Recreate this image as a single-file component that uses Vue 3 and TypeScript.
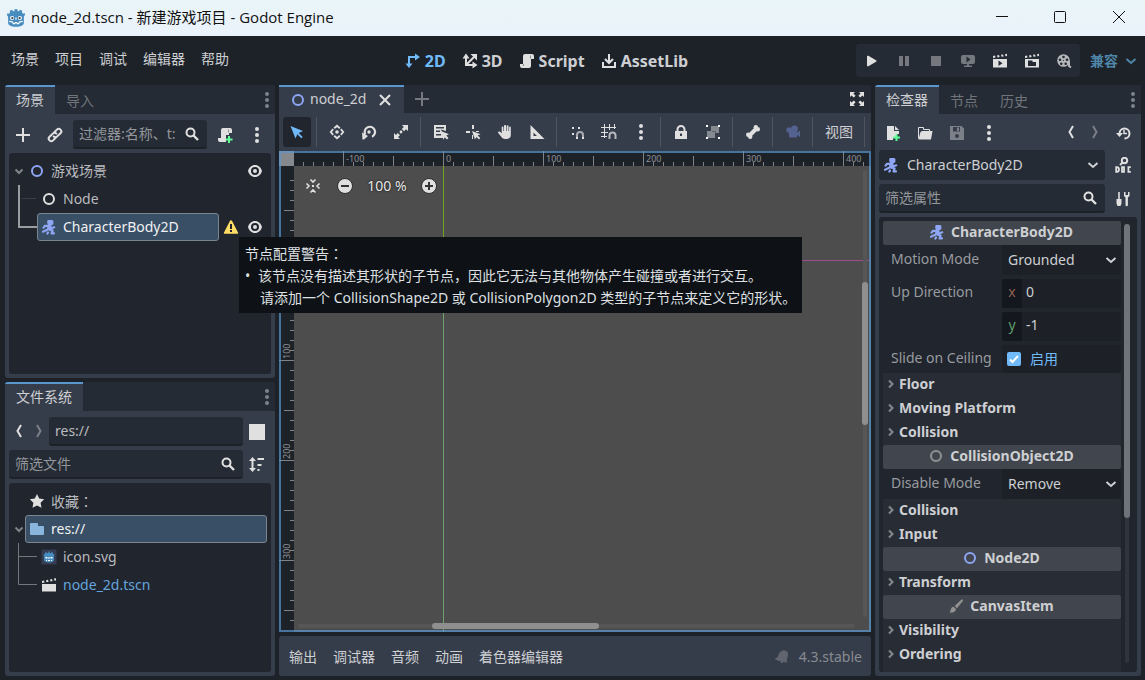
<script setup lang="ts">
import { computed, h, onBeforeUnmount, onMounted, ref } from 'vue'

const R = '#e0e0e0'

const icons: Record<string, string> = {
  node2d: '<circle cx="8" cy="8" r="5" fill="none" stroke="#8da5f3" stroke-width="2"/>',
  node: `<circle cx="8" cy="8" r="5" fill="none" stroke="${R}" stroke-width="2"/>`,
  collision: '<circle cx="8" cy="8" r="5" fill="none" stroke="#919191" stroke-width="2"/>',
  character:
    '<g fill="none" stroke="#8da5f3" stroke-width="2.2" stroke-linejoin="round" stroke-linecap="round"><path d="M7.500 6.800H4L2.600 8.600M9 7.500l1.600 1.800 2.600-1M8 9.500l-2.400 1.600-3.600 1.600M8.600 10.600l3 1-1 2.800h2.400M7 13.400l-.6 1.200"/></g><path fill="#8da5f3" d="M7 1h4.400l1 1v3l-1.200 1-1 .6.200 4.400H6.400L6 6.400l1-1.200-.8-1V2z"/>',
  eye: `<path fill="${R}" fill-rule="evenodd" d="M8 2C4.600 2 2 4.400 1 8c1 3.600 3.600 6 7 6s6-2.400 7-6c-1-3.600-3.600-6-7-6zm0 2a4 4 0 1 1 0 8 4 4 0 0 1 0-8z"/><circle cx="8" cy="8" r="2" fill="${R}"/>`,
  warning:
    '<path fill="#ffdd65" d="M8 1.200c.5 0 .8.200 1 .6l6 11.600c.4.800 0 1.400-.8 1.400H1.800c-.8 0-1.200-.6-.8-1.400l6-11.600c.2-.4.5-.6 1-.6z"/><path fill="#22252d" d="M7 5h2v5H7zM7 11h2v2H7z"/>',
  plus: `<path fill="${R}" d="M7 1h2v6h6v2H9v6H7V9H1V7h6z"/>`,
  link: `<g fill="none" stroke="${R}" stroke-width="2" stroke-linecap="round"><path d="M7.300 5.200l2.600-2.600a2.500 2.500 0 0 1 3.600 3.600L10.200 9.400a2.500 2.500 0 0 1-3.500.1"/><path d="M8.700 10.800l-2.600 2.600a2.500 2.500 0 0 1-3.600-3.600L5.800 6.600a2.500 2.500 0 0 1 3.500-.1"/></g>`,
  search: `<circle cx="6.500" cy="6.500" r="4" fill="none" stroke="${R}" stroke-width="2"/><path d="M9.500 9.500l4.500 4.500" stroke="${R}" stroke-width="2.400"/>`,
  script: `<path fill="${R}" d="M6 1a2 2 0 0 0-2 2v8H1v2a2 2 0 0 0 2 2h7a2 2 0 0 0 2-2V6h3V3a2 2 0 0 0-2-2z"/><path d="M11.500 2.500v3M4.500 11v2" stroke="#8b8d91"/>`,
  scriptAdd: `<path fill="${R}" d="M6 1a2 2 0 0 0-2 2v8H1v2a2 2 0 0 0 2 2h6V9h3V6h3V3a2 2 0 0 0-2-2z"/><path d="M11.500 2.500v3" stroke="#8b8d91"/><path fill="#363d4a" d="M9 8h7v8H9z"/><path fill="#5fff97" d="M11 9h2v2.500h2.500v2H13V16h-2v-2.500H8.500v-2H11z"/>`,
  dots: `<g fill="${R}"><circle cx="8" cy="2" r="2"/><circle cx="8" cy="8" r="2"/><circle cx="8" cy="14" r="2"/></g>`,
  dotsDim: '<g fill="#7e838b"><circle cx="8" cy="2" r="2"/><circle cx="8" cy="8" r="2"/><circle cx="8" cy="14" r="2"/></g>',
  chevronDown: '<path d="M4.500 6.500L8 10l3.500-3.500" fill="none" stroke="#808389" stroke-width="2"/>',
  chevronRight: '<path d="M6 4.500L9.500 8 6 11.500" fill="none" stroke="#85888e" stroke-width="2"/>',
  dropdown: '<path d="M3.500 6L8 10l4.500-4" fill="none" stroke="currentColor" stroke-width="2"/>',
  back: `<path d="M10 1L6.500 7l3.500 6" fill="none" stroke="${R}" stroke-width="2"/>`,
  forward: '<path d="M6 1l3.500 6L6 13" fill="none" stroke="#7b7f87" stroke-width="2"/>',
  star: `<path fill="${R}" d="M8 1l2.200 4.600 5 .7-3.600 3.500.9 5L8 12.400l-4.500 2.400.9-5L.8 6.300l5-.7z"/>`,
  folder: '<path fill="#8ab5dc" d="M2 2a1 1 0 0 0-1 1v10a1 1 0 0 0 1 1h12a1 1 0 0 0 1-1V6a1 1 0 0 0-1-1H9V3a1 1 0 0 0-1-1z"/>',
  split: `<path fill="${R}" d="M0 0h16v16H0z"/>`,
  sort: `<path fill="${R}" d="M3.500 0L7 4H4.500v7H7l-3.500 4L0 11h2.500V4H0zM8.500 1H15v2H8.500zM8.500 7h4v2h-4zM8.500 12h2v2h-2z"/>`,
  clapper: `<path fill="${R}" d="M1 7h14v7.500H1zM1 4l2-.4.600 2-2.600.4zM5 3.200l2-.4.600 2-2 .4zM9 2.400l2-.4.600 2-2 .4zM13 1.600l2-.4V3.400l-1.500.3z"/>`,
  play: `<path fill="${R}" d="M3 3.500c0-.9.800-1 1.400-.7l7.600 4.400c.7.400.7 1.200 0 1.600l-7.600 4.400c-.6.300-1.400.2-1.400-.7z"/>`,
  pause: '<path fill="#75787e" d="M3 3h4v10H3zM9 3h4v10H9z"/>',
  stop: '<path fill="#75787e" d="M3 3h10v10H3z"/>',
  remote: '<path fill="#75787e" fill-rule="evenodd" d="M3 2h10a2 2 0 0 1 2 2v5a2 2 0 0 1-2 2H9v1.500h3V14H4v-1.500h3V11H3a2 2 0 0 1-2-2V4a2 2 0 0 1 2-2zm3.500 1.500v6l4-3z"/>',
  playScene: `<path fill="${R}" fill-rule="evenodd" d="M1 6h14v8.500H1zm5.500 1.500v5.500l4-2.700zM1 3l2-.4.600 2-2.600.4zM5 2.400l2-.4.600 2-2 .4zM9 1.800l2-.4.600 2-2 .4zM13 1.200l2-.4V3l-1.500.3z"/>`,
  playCustom: `<path fill="${R}" fill-rule="evenodd" d="M1 6h14v8.500H1zm3 1.500v5.500h8V9H8.500V7.500zM1 3l2-.4.600 2-2.600.4zM5 2.400l2-.4.600 2-2 .4zM9 1.800l2-.4.600 2-2 .4zM13 1.200l2-.4V3l-1.500.3z"/>`,
  movie: '<circle cx="7.500" cy="7.500" r="6.300" fill="#b5b7ba"/><path d="M13 8v5l2 1.500" stroke="#b5b7ba" stroke-width="2" fill="none"/><g fill="#252b34"><circle cx="7.500" cy="4" r="1.300"/><circle cx="11" cy="6.700" r="1.300"/><circle cx="4" cy="6.700" r="1.300"/><circle cx="5.300" cy="10.700" r="1.300"/><circle cx="9.700" cy="10.700" r="1.300"/><circle cx="7.500" cy="7.500" r=".6"/></g>',
  close: `<path d="M3 3l10 10M13 3L3 13" stroke="${R}" stroke-width="2"/>`,
  plusDim: '<path fill="#75787e" d="M7 1h2v6h6v2H9v6H7V9H1V7h6z"/>',
  distraction: `<path fill="${R}" d="M1 1h5L4.400 2.600l2.200 2.200-1.800 1.800-2.200-2.200L1 6zM15 1v5l-1.600-1.600-2.200 2.200-1.800-1.800 2.200-2.200L10 1zM1 15v-5l1.600 1.600 2.200-2.200 1.800 1.800-2.200 2.200L6 15zM15 15h-5l1.600-1.600-2.200-2.200 1.800-1.800 2.200 2.200L15 10z"/>`,
  ws2d: '<path d="M4 11V4h7" fill="none" stroke="#70bafa" stroke-width="2"/><path fill="#70bafa" d="M10 .5L15 4l-5 3.500zM.5 10.500h7L4 15z"/>',
  ws3d: `<path d="M4 4v8h8M4 12l8-8" fill="none" stroke="${R}" stroke-width="2"/><path fill="${R}" d="M.5 5.500L4 .5l3.500 5zM10.500 8.500l5 3.500-5 3.500zM8.500 1H15v6.500z"/>`,
  assetlib: `<path d="M8 1v8M4 6l4 4 4-4M2 9v5h12V9" fill="none" stroke="${R}" stroke-width="2"/>`,
  select: '<path fill="#70bafa" d="M1.500 2l12.500 5-4.300 1.900 4 4-1.400 1.400-4-4-1.800 4.200z"/>',
  move: `<circle cx="8" cy="8" r="1.800" fill="${R}"/><path fill="none" stroke="${R}" stroke-width="1.800" d="M5.200 4.200L8 1.800l2.800 2.400M5.200 11.800L8 14.200l2.800-2.400M4.200 5.200L1.800 8l2.400 2.800M11.800 5.200L14.200 8l-2.400 2.800"/>`,
  rotate: `<path d="M4.300 10.500A5.200 5.200 0 1 1 11 12.700" fill="none" stroke="${R}" stroke-width="2.200"/><path fill="${R}" d="M1 8.500l6 3.500-4 3.500H1.500z"/><circle cx="8" cy="8" r="1.700" fill="${R}"/>`,
  scale: `<path fill="${R}" d="M9 1h6v6l-2-1.800-2 2L8.800 5l2-2zM1 9l2 2 1.800-2L7 11.200l-2 1.800L7 15H1z"/><circle cx="8" cy="8" r="1.400" fill="${R}"/>`,
  listSelect: `<path fill="${R}" fill-rule="evenodd" d="M1 1h12v6l-5-1.500L10.500 14H1zm2 2v1.500h8V3zm0 3.500V8h4V6.500zM3 10v1.500h5V10z"/><path fill="${R}" d="M8 7l8 3.200-2.700 1.300L15.500 14 14 15.500l-2.400-2.300L10.500 16z"/>`,
  pivot: `<path fill="${R}" d="M7 1h2v4H7zM1 7h4v2H1zM7 11h1v4H7zM11 7h3v1h-3z"/><path fill="${R}" d="M7 7l8.500 3.200-2.900 1.300 2.700 2.500-1.300 1.500-2.700-2.600L10 15.500z"/>`,
  hand: `<path fill="${R}" d="M8.300 1c.6 0 .9.400.9.900V7h.6V2.200c0-1.200 1.700-1.200 1.700 0V7h.6V3.500c0-1.200 1.700-1.200 1.700 0V11c0 2.500-1.700 4-4 4H8c-1.500 0-2.500-.6-3.300-1.700L1.200 9c-.6-1 .9-1.900 1.800-1.200L4.700 9.200V3.300c0-1.200 1.700-1.200 1.700 0V7H7V1.900c0-.5.600-.9 1.300-.9z"/>`,
  ruler: `<path fill="${R}" fill-rule="evenodd" d="M1.500 1v14h14zm3 7.500l3.500 3.500H4.500z"/>`,
  snap: `<path d="M8 15v-4a3 3 0 0 1 6 0v4" fill="none" stroke="#a9abb0" stroke-width="2"/><path fill="${R}" d="M3 3h2v2H3zM9 3h2v2H9zM3 9h2v2H3zM7 13h2v2H7zM13 13h2v2h-2z"/>`,
  gridSnap: `<path d="M3.500 0v14M8.500 0v6M13.500 0v5M0 3.500h15M0 8.500h7M0 12.500h6" stroke="${R}" fill="none"/><path d="M8.500 15v-3.500a3 3 0 0 1 6 0V15" fill="none" stroke="#b5b7bb" stroke-width="2"/>`,
  lock: `<path fill="${R}" fill-rule="evenodd" d="M8 1a4.500 4.500 0 0 0-4.500 4.500V7H2v8h12V7h-1.500V5.500A4.500 4.500 0 0 0 8 1zm0 2a2.500 2.500 0 0 1 2.500 2.500V7h-5V5.500A2.500 2.500 0 0 1 8 3zM7 9.500h2V12H7z"/>`,
  group: '<path fill="#858990" d="M6 2h8v7h-4v5H2V7h4z"/><path d="M7 7.500h3.500V9" fill="none" stroke="#5a606c"/><path fill="#fff" d="M1 1h2v2H1zM13 1h2v2h-2zM1 13h2v2H1zM13 13h2v2h-2z"/>',
  bone: `<path d="M5 11l6-6" stroke="${R}" stroke-width="4"/><g fill="${R}"><circle cx="10.800" cy="3.200" r="2.200"/><circle cx="12.800" cy="5.200" r="2.200"/><circle cx="3.200" cy="10.800" r="2.200"/><circle cx="5.200" cy="12.800" r="2.200"/></g>`,
  camera: '<g fill="#54628f"><circle cx="9.500" cy="4.800" r="3.400"/><circle cx="4" cy="6" r="2.700"/><path d="M3 6h9v2.500L15 6.500v6.500l-3-2v1.500a1 1 0 0 1-1 1H5a1 1 0 0 1-1-1V9z"/></g>',
  fileNew: `<path fill="${R}" d="M2 1h7v5h5v3h-3v3H8v3H2zM10 1l4 4h-4z"/><path fill="#5fff97" d="M10.500 9h2v2.500H15v2h-2.500V16h-2v-2.500H8v-2h2.500z"/>`,
  open: `<path fill="none" stroke="${R}" d="M1.500 13.500v-11h5v2h6V6"/><path fill="${R}" d="M5 6h10.500L14 14.500H1.500L3.500 7z"/>`,
  save: '<path fill="#7c8089" fill-rule="evenodd" d="M1 1h11.500L15 3.500V15H1zm3 1v4.500h7V2zm4 .5h2V6H8zM8 9a2 2 0 1 0 0 4 2 2 0 0 0 0-4z"/>',
  history: `<path d="M4.500 8.500a5 5 0 1 1 5 5" fill="none" stroke="${R}" stroke-width="2"/><path d="M9 5v3.500h3" fill="none" stroke="${R}" stroke-width="1.500"/><path fill="${R}" d="M1 8h7l-3.500 4z"/>`,
  doc: `<circle cx="9.500" cy="3.500" r="2.700" fill="none" stroke="${R}" stroke-width="2"/><path d="M7.500 5.500L5 8" stroke="${R}" stroke-width="2"/><path fill="none" stroke="${R}" stroke-width="1.800" d="M1.200 10.200v4.600h.8q2-.2 2-2.300t-2-2.300zM7 10.200h2v4.600H7zM15.800 10.200h-2.400v4.600h2.400"/>`,
  tools: `<path fill="${R}" d="M3.200 1h1.600v7H6.500v4.500L5.500 15h-3l-1-2.500V8h1.700zM9 1v4l1.500 1.500V14a1.200 1.200 0 0 0 2.400 0V6.500L14.500 5V1H13v3h-2.500V1z"/>`,
  brush: '<path fill="#919191" d="M14.500 1.200l.5 1.500-6 7.500-2.300-2.200 6.500-6.300zM5.700 8.700L8 11c-.3 3-3 4-6.500 3.800 1-.8.9-1.800 1.200-3.300.4-1.700 1.500-2.600 3-2.800z"/>',
  bell: '<path fill="#60656f" d="M9 1l4 1.300c1.300 1.500 1.300 3.500.6 5.700l-.8 2.400c-.2.700 0 1.200.5 1.700l-1 1.700-3-1.200c-.3 2-2.300 2.200-3-.3L1 10.600l.8-1.500c1 0 1.600-.6 2-1.500l1-2.300C5.500 3 7 2 8.500 2z"/>',
  center: `<path fill="none" stroke="${R}" stroke-width="1.600" d="M5.500 1.500L8 4l2.500-2.500M5.500 14.500L8 12l2.500 2.500M1.500 5.500L4 8l-2.500 2.500M14.500 5.500L12 8l2.500 2.500"/><path fill="${R}" d="M7 7h2v2H7z"/>`,
  zoomOut: '<circle cx="8" cy="8" r="7.500" fill="#e0e0e0" stroke="#2d2d2d"/><path fill="#333" d="M4 7h8v2H4z"/>',
  zoomIn: '<circle cx="8" cy="8" r="7.500" fill="#e0e0e0" stroke="#2d2d2d"/><path fill="#333" d="M4 7h3V4h2v3h3v2H9v3H7V9H4z"/>',
  godot:
    '<path fill="#478cbf" d="M2.500 1.500l2-.9.900 1.500 1.200-.2V.3h2.800v1.600l1.200.2.900-1.500 2 .9-.1 1.900 1 .8 1.300-.6.300 1.800-1 1.300V12.500c0 2-3 3.300-7 3.300s-7-1.300-7-3.300V6.800L0 5.500l.3-1.800 1.300.6 1-.8z"/><path stroke="#fff" fill="none" d="M2 11l3 .5.500 1.500h1.500l.4-1h1.200l.4 1h1.500l.5-1.500 3-.5"/><g fill="#fff"><circle cx="4.500" cy="8" r="1.800"/><circle cx="11.500" cy="8" r="1.800"/><path d="M7.500 7.500h1v2h-1z"/></g><g fill="#414042"><circle cx="4.700" cy="8" r="1"/><circle cx="11.300" cy="8" r="1"/></g>',
  godotFile:
    '<rect width="15" height="15" x=".5" y=".5" rx="1" fill="#363d52"/><path fill="#478cbf" d="M4 4l1-1 1 1 1.300-.1V2.500h1.400v1.400L10 4l1-1 1 1v1l1.500.5L13 7v4c0 1.500-2 2.500-5 2.500S3 12.500 3 11V7l-.5-1.500L4 5z"/><path fill="#fff" d="M4.500 8h2v1.500h-2zM9.500 8h2v1.500h-2zM7.500 8h1v2h-1zM5 11h1v1H5zM7 11h2v1H7zM10 11h1v1h-1z"/>',
}

const Icon = (props: { name: string }) =>
  h('svg', { class: 'icon', viewBox: '0 0 16 16', width: 16, height: 16, 'aria-hidden': 'true', innerHTML: icons[props.name] })
Icon.props = ['name']

const menus = ['场景', '项目', '调试', '编辑器', '帮助']
const workspaces = [
  { label: '2D', icon: 'ws2d' },
  { label: '3D', icon: 'ws3d' },
  { label: 'Script', icon: 'script' },
  { label: 'AssetLib', icon: 'assetlib' },
]
const activeWorkspace = ref('2D')
const runButtons = [
  { icon: 'play', label: '运行项目' },
  { icon: 'pause', label: '暂停' },
  { icon: 'stop', label: '停止' },
  { icon: 'remote', label: '远程调试' },
  { icon: 'playScene', label: '运行当前场景' },
  { icon: 'playCustom', label: '运行指定场景' },
  { icon: 'movie', label: '影片模式' },
]
const toolGroups = [
  ['select'],
  ['move', 'rotate', 'scale'],
  ['listSelect', 'pivot', 'hand', 'ruler'],
  ['snap', 'gridSnap', 'dots'],
  ['lock', 'group'],
  ['bone'],
  ['camera'],
]
const activeTool = ref('select')
const bottomTabs = ['输出', '调试器', '音频', '动画', '着色器编辑器']

const slideOnCeiling = ref(true)

interface Tick { at: number; size: number; label: string }

const origin = { x: 164, y: 109 }
const rulerSize = 15

function ticks(zero: number, end: number): Tick[] {
  const list: Tick[] = []
  for (let v = Math.ceil((rulerSize + 5 - zero) / 10) * 10; v + zero < end - 2; v += 10) {
    const major = v % 100 === 0
    list.push({
      at: v + zero,
      size: major ? rulerSize : v % 50 === 0 ? 10 : 4,
      label: major && v + zero < end - 20 ? String(v) : '',
    })
  }
  return list
}

const viewport = ref<HTMLElement | null>(null)
const size = ref({ width: 0, height: 0 })
const topTicks = computed(() => ticks(origin.x, size.value.width))
const sideTicks = computed(() => ticks(origin.y, size.value.height))

function measure() {
  if (viewport.value) size.value = { width: viewport.value.clientWidth, height: viewport.value.clientHeight }
}
onMounted(() => {
  measure()
  window.addEventListener('resize', measure)
})
onBeforeUnmount(() => window.removeEventListener('resize', measure))
</script>

<template>
  <div class="window">
    <header class="titlebar">
      <Icon name="godot" class="app-icon" />
      <h1>node_2d.tscn - 新建游戏项目 - Godot Engine</h1>
      <div class="window-buttons">
        <button aria-label="最小化"><svg width="12" height="12" viewBox="0 0 12 12"><path d="M0 5.500h12" /></svg></button>
        <button aria-label="最大化"><svg width="12" height="12" viewBox="0 0 12 12"><rect x=".5" y=".5" width="11" height="11" rx="1" /></svg></button>
        <button aria-label="关闭"><svg width="12" height="12" viewBox="0 0 12 12"><path d="M0 0l12 12M12 0L0 12" /></svg></button>
      </div>
    </header>

    <div class="topbar">
      <nav class="menu">
        <button v-for="m in menus" :key="m">{{ m }}</button>
      </nav>
      <nav class="workspaces">
        <button v-for="w in workspaces" :key="w.label" :class="{ active: activeWorkspace === w.label }" @click="activeWorkspace = w.label">
          <Icon :name="w.icon" />{{ w.label }}
        </button>
      </nav>
      <div class="run-area">
        <div class="run-bar">
          <button v-for="b in runButtons" :key="b.icon" :aria-label="b.label"><Icon :name="b.icon" /></button>
        </div>
        <div class="renderer">
          <select aria-label="渲染器"><option>兼容</option></select>
          <Icon name="dropdown" class="drop" />
        </div>
      </div>
    </div>

    <main class="docks">
      <div class="left">
        <section class="dock">
          <div class="tabs">
            <button class="tab active">场景</button>
            <button class="tab">导入</button>
            <button class="tab-menu" aria-label="面板选项"><Icon name="dotsDim" /></button>
          </div>
          <div class="dock-body">
            <div class="row">
              <button class="tool" aria-label="添加节点"><Icon name="plus" /></button>
              <button class="tool" aria-label="实例化场景"><Icon name="link" /></button>
              <div class="field">
                <input type="text" aria-label="过滤节点" placeholder="过滤器:名称、t:" />
                <Icon name="search" />
              </div>
              <button class="tool" aria-label="附加脚本"><Icon name="scriptAdd" /></button>
              <button class="tool" aria-label="更多"><Icon name="dots" /></button>
            </div>
            <div class="tree" role="tree">
              <div class="item" role="treeitem">
                <button class="fold" aria-label="折叠"><Icon name="chevronDown" /></button>
                <span class="label"><Icon name="node2d" />游戏场景</span>
                <button class="mini" aria-label="可见性"><Icon name="eye" /></button>
              </div>
              <div class="item" role="treeitem">
                <svg class="guide" width="28" height="28"><path class="strong" d="M10 0v28" /><path class="faint" d="M13 13.500h14" /></svg>
                <span class="label"><Icon name="node" />Node</span>
              </div>
              <div class="item" role="treeitem" aria-selected="true">
                <svg class="guide" width="28" height="28"><path class="strong" d="M10 0v14h18" /></svg>
                <span class="label selected"><Icon name="character" />CharacterBody2D</span>
                <button class="mini warn" aria-label="节点配置警告"><Icon name="warning" /></button>
                <button class="mini" aria-label="可见性"><Icon name="eye" /></button>
              </div>
            </div>
          </div>
        </section>

        <section class="dock">
          <div class="tabs">
            <button class="tab active">文件系统</button>
            <button class="tab-menu" aria-label="面板选项"><Icon name="dotsDim" /></button>
          </div>
          <div class="dock-body">
            <div class="row files">
              <div class="arrows">
                <button aria-label="后退"><Icon name="back" /></button>
                <button aria-label="前进"><Icon name="forward" /></button>
              </div>
              <div class="field"><input type="text" class="path" aria-label="路径" value="res://" /></div>
              <button class="slim" aria-label="拆分模式"><Icon name="split" /></button>
            </div>
            <div class="row files">
              <div class="field">
                <input type="text" aria-label="筛选文件" placeholder="筛选文件" />
                <Icon name="search" />
              </div>
              <button class="slim" aria-label="排序"><Icon name="sort" /></button>
            </div>
            <div class="tree file-tree" role="tree">
              <div class="item" role="treeitem">
                <span class="fold"></span>
                <span class="label"><Icon name="star" /><span>收藏<span class="colon">：</span></span></span>
              </div>
              <div class="item" role="treeitem" aria-selected="true">
                <button class="fold" aria-label="折叠"><Icon name="chevronDown" /></button>
                <span class="label selected"><Icon name="folder" />res://</span>
              </div>
              <div class="item" role="treeitem">
                <svg class="guide" width="28" height="28"><path d="M9.500 0v28M9 13.500h19" /></svg>
                <span class="label"><Icon name="godotFile" />icon.svg</span>
              </div>
              <div class="item" role="treeitem">
                <svg class="guide" width="28" height="28"><path d="M9.500 0v13.500h18.500" /></svg>
                <span class="label open"><Icon name="clapper" />node_2d.tscn</span>
              </div>
            </div>
          </div>
        </section>
      </div>

      <div class="center">
        <div class="scene-tabs">
          <div class="scene-tab">
            <Icon name="node2d" /><span>node_2d</span>
            <button aria-label="关闭场景"><Icon name="close" /></button>
          </div>
          <button class="add-tab" aria-label="新建场景"><Icon name="plusDim" /></button>
          <button class="expand" aria-label="专注模式"><Icon name="distraction" /></button>
        </div>
        <div class="toolbar">
          <template v-for="(g, i) in toolGroups" :key="i">
            <button v-for="t in g" :key="t" class="tool" :class="{ pressed: activeTool === t }" :aria-label="t" @click="activeTool = t">
              <Icon :name="t" />
            </button>
            <span class="sep"></span>
          </template>
          <button class="view">视图</button>
          <span class="sep"></span>
        </div>
        <div ref="viewport" class="viewport">
          <svg class="canvas" width="100%" height="100%">
            <line class="axis-y up" x1="164.500" x2="164.500" y1="15" y2="109" />
            <line class="axis-y" x1="164.500" x2="164.500" y1="109" y2="100%" />
            <line class="axis-x" x1="15" x2="100%" y1="109.500" y2="109.500" />
            <rect class="ruler" width="100%" height="15" />
            <rect class="ruler" width="15" height="100%" />
            <g v-for="t in topTicks" :key="'t' + t.at">
              <path class="tick" :d="`M${t.at + 0.5} ${rulerSize - t.size}v${t.size}`" />
              <text v-if="t.label" :x="t.at + 3" y="11">{{ t.label }}</text>
            </g>
            <g v-for="t in sideTicks" :key="'s' + t.at">
              <path class="tick" :d="`M${rulerSize - t.size} ${t.at + 0.5}h${t.size}`" />
              <text v-if="t.label && t.label !== '0'" :transform="`translate(11 ${t.at - 1}) rotate(-90)`">{{ t.label }}</text>
            </g>
            <rect class="corner" width="15" height="15" />
          </svg>
          <div class="zoom">
            <button aria-label="居中视图"><Icon name="center" /></button>
            <button aria-label="缩小"><Icon name="zoomOut" /></button>
            <button class="percent">100 %</button>
            <button aria-label="放大"><Icon name="zoomIn" /></button>
          </div>
          <div class="vbar"><i></i></div>
          <div class="hbar"><i></i></div>
          <div class="frame"></div>
        </div>
        <footer class="bottom">
          <button v-for="b in bottomTabs" :key="b">{{ b }}</button>
          <span class="version"><Icon name="bell" />4.3.stable</span>
        </footer>
      </div>

      <section class="dock right">
        <div class="tabs">
          <button class="tab active">检查器</button>
          <button class="tab">节点</button>
          <button class="tab">历史</button>
          <button class="tab-menu" aria-label="面板选项"><Icon name="dotsDim" /></button>
        </div>
        <div class="dock-body">
          <div class="row head">
            <button class="tool" aria-label="新建资源"><Icon name="fileNew" /></button>
            <button class="tool" aria-label="打开资源"><Icon name="open" /></button>
            <button class="tool" aria-label="保存资源"><Icon name="save" /></button>
            <button class="tool" aria-label="更多"><Icon name="dots" /></button>
            <button class="slim push" aria-label="上一个"><Icon name="back" /></button>
            <button class="slim" aria-label="下一个"><Icon name="forward" /></button>
            <button class="tool" aria-label="历史记录"><Icon name="history" /></button>
          </div>
          <div class="row object">
            <div class="picker">
              <Icon name="character" />
              <select aria-label="当前对象"><option>CharacterBody2D</option></select>
              <Icon name="dropdown" class="drop" />
            </div>
            <button class="tool" aria-label="文档"><Icon name="doc" /></button>
          </div>
          <div class="row">
            <div class="field">
              <input type="text" aria-label="筛选属性" placeholder="筛选属性" />
              <Icon name="search" />
            </div>
            <button class="tool" aria-label="属性选项"><Icon name="tools" /></button>
          </div>
          <div class="inspector">
            <div class="props">
              <h2><Icon name="character" />CharacterBody2D</h2>
              <div class="prop">
                <label for="motion">Motion Mode</label>
                <div class="editor tall">
                  <select id="motion"><option>Grounded</option></select>
                  <Icon name="dropdown" class="drop" />
                </div>
              </div>
              <div class="prop spaced">
                <label for="up-x">Up Direction</label>
                <div class="vector">
                  <div class="editor"><span class="axis x">x</span><input id="up-x" type="text" value="0" /></div>
                  <div class="editor"><span class="axis y">y</span><input type="text" aria-label="Up Direction y" value="-1" /></div>
                </div>
              </div>
              <div class="prop">
                <span class="name">Slide on Ceiling</span>
                <label class="editor check">
                  <input v-model="slideOnCeiling" type="checkbox" />
                  <svg v-if="slideOnCeiling" width="14" height="14" viewBox="0 0 14 14"><path d="M3 7.500l2.500 2.500L11 4" /></svg>
                  启用
                </label>
              </div>
              <button class="section"><Icon name="chevronRight" />Floor</button>
              <button class="section"><Icon name="chevronRight" />Moving Platform</button>
              <button class="section"><Icon name="chevronRight" />Collision</button>
              <h2><Icon name="collision" />CollisionObject2D</h2>
              <div class="prop">
                <label for="disable">Disable Mode</label>
                <div class="editor tall">
                  <select id="disable"><option>Remove</option></select>
                  <Icon name="dropdown" class="drop" />
                </div>
              </div>
              <button class="section"><Icon name="chevronRight" />Collision</button>
              <button class="section"><Icon name="chevronRight" />Input</button>
              <h2><Icon name="node2d" />Node2D</h2>
              <button class="section"><Icon name="chevronRight" />Transform</button>
              <h2><Icon name="brush" />CanvasItem</h2>
              <button class="section"><Icon name="chevronRight" />Visibility</button>
              <button class="section"><Icon name="chevronRight" />Ordering</button>
              <div class="rest"></div>
            </div>
            <div class="scroll"><i></i></div>
          </div>
        </div>
      </section>
    </main>

    <div class="tooltip" role="tooltip">
      <p>节点配置警告<span class="colon">：</span></p>
      <ul>
        <li>该节点没有描述其形状的子节点，因此它无法与其他物体产生碰撞或者进行交互。</li>
        <li class="next">请添加一个 CollisionShape2D 或 CollisionPolygon2D 类型的子节点来定义它的形状。</li>
      </ul>
    </div>
  </div>
</template>

<style>
body {
  margin: 0;
  background: #1d2229;
}
</style>

<style scoped>
.window {
  position: relative;
  display: flex;
  flex-direction: column;
  height: 100vh;
  min-height: 600px;
  overflow: hidden;
  background: #1d2229;
  color: #cdcfd2;
  font: 14px/20px "Noto Sans", "Noto Sans CJK SC", sans-serif;
}
.window *,
.window *::before {
  box-sizing: border-box;
}
button,
input,
select {
  margin: 0;
  padding: 0;
  border: 0;
  background: none;
  color: inherit;
  font: inherit;
  appearance: none;
  outline: none;
  border-radius: 0;
}
button {
  display: flex;
  align-items: center;
  justify-content: center;
  white-space: nowrap;
}
.icon {
  flex: none;
  display: block;
}
.colon {
  font-family: "Noto Sans CJK TC", sans-serif;
}
.titlebar {
  display: flex;
  align-items: center;
  flex: none;
  height: 36px;
  padding-left: 7px;
  background: linear-gradient(#e9f5f7, #ebf2fb);
  color: #111;
}
.app-icon {
  width: 18px;
  height: 18px;
}
.titlebar h1 {
  margin: 0 0 0 6px;
  padding-bottom: 2px;
  font: 400 15px/20px "Open Sans", "Noto Sans CJK SC", sans-serif;
}
.window-buttons {
  display: flex;
  margin-left: auto;
}
.window-buttons button {
  width: 58px;
  height: 36px;
  padding-bottom: 2px;
}
.window-buttons button:last-child {
  width: 56px;
  padding-left: 4px;
}
.window-buttons svg {
  fill: none;
  stroke: #111;
  overflow: visible;
}
.topbar {
  display: flex;
  align-items: center;
  justify-content: space-between;
  flex: none;
  height: 49px;
  padding: 0 6px 0 3px;
}
.menu {
  display: flex;
  padding-bottom: 3px;
}
.menu button {
  padding: 0 8px;
}
.workspaces {
  display: flex;
  gap: 16px;
  font-size: 16px;
  font-weight: 700;
}
.workspaces button {
  gap: 4px;
}
.workspaces .active {
  color: #70bafa;
}
.run-area {
  display: flex;
  align-items: center;
  gap: 10px;
}
.run-bar {
  display: flex;
  height: 33px;
  border-radius: 3px;
  background: #252b34;
}
.run-bar button {
  width: 32px;
}
.renderer {
  display: flex;
  align-items: center;
  gap: 5px;
  color: #4f86a8;
  font-weight: 700;
}
.drop {
  pointer-events: none;
}
.docks {
  display: grid;
  grid-template-columns: 270px minmax(0, 1fr) 266px;
  gap: 4px;
  flex: 1;
  min-height: 0;
  padding: 0 4px 4px 5px;
}
.left {
  display: grid;
  grid-template-rows: 293fr 294fr;
  gap: 4px;
  min-height: 0;
}
.dock {
  display: flex;
  flex-direction: column;
  min-height: 0;
  overflow: hidden;
  border-radius: 3px;
  background: #363d4a;
}
.tabs {
  display: flex;
  flex: none;
  height: 29px;
  background: #252b34;
}
.tab {
  padding: 2px 11px 0;
  color: #70757c;
}
.tab.active {
  padding: 0 11px 2px;
  border-top: 2px solid #5a97cf;
  background: #363d4a;
  color: #cdcfd2;
}
.tab-menu {
  width: 16px;
  margin-left: auto;
}
.dock-body {
  display: flex;
  flex-direction: column;
  flex: 1;
  gap: 4px;
  min-height: 0;
  padding: 6px 4px 4px;
}
.row {
  display: flex;
  flex: none;
  gap: 4px;
  height: 29px;
}
.row.files {
  padding-right: 4px;
}
.row.head {
  height: 26px;
}
.row.object {
  height: 30px;
}
.tool {
  flex: none;
  width: 28px;
}
.slim {
  flex: none;
  width: 20px;
}
.push {
  margin-left: auto;
}
.arrows {
  display: flex;
  margin-right: -4px;
}
.arrows button {
  width: 20px;
}
.field {
  display: flex;
  align-items: center;
  flex: 1;
  min-width: 0;
  padding: 0 7px 0 6px;
  border-bottom: 2px solid #1d2229;
  border-radius: 3px;
  background: #252b34;
}
.field input {
  flex: 1;
  width: 0;
  min-width: 0;
  color: #b9bbbf;
}
.field input::placeholder {
  color: #93979c;
  opacity: 1;
}
.tree {
  flex: 1;
  padding: 4px 0;
  border-radius: 3px;
  background: #21252e;
}
.file-tree {
  padding-right: 4px;
}
.item {
  display: flex;
  align-items: center;
  height: 28px;
}
.fold {
  width: 16px;
  height: 28px;
  flex: none;
  padding-left: 4px;
}
.label {
  display: flex;
  align-items: center;
  flex: 1;
  gap: 6px;
  height: 28px;
  padding-left: 4px;
  color: #b9bbbf;
}
.label.selected {
  padding-left: 3px;
  border: 1px solid #7a8590;
  border-radius: 3px;
  background: #394f66;
  color: #f0f1f2;
}
.label.open {
  color: #63a4dc;
}
.mini {
  width: 16px;
  margin-right: 8px;
}
.warn {
  margin-left: 4px;
}
.guide {
  flex: none;
  fill: none;
  stroke: #74777d;
}
.guide .strong {
  stroke: #9a9ca0;
  stroke-width: 2;
}
.guide .faint {
  stroke: #3a3e46;
}
.center {
  display: flex;
  flex-direction: column;
  min-width: 0;
  min-height: 0;
}
.scene-tabs {
  display: flex;
  flex: none;
  height: 28px;
  border-radius: 3px 3px 0 0;
  background: #252b34;
}
.scene-tab {
  display: flex;
  align-items: center;
  padding: 0 11px;
  border-top: 2px solid #5a97cf;
  background: #363d4a;
}
.scene-tab span {
  padding: 0 11px 2px 4px;
}
.add-tab {
  width: 36px;
}
.expand {
  width: 28px;
  margin-left: auto;
}
.toolbar {
  display: flex;
  flex: none;
  gap: 4px;
  padding: 4px;
  height: 38px;
  background: #363d4a;
}
.pressed {
  border-radius: 3px;
  background: #21262e;
}
.sep {
  flex: none;
  width: 1px;
  margin: 0 2px 0 1px;
  background: #4d535f;
}
.view {
  width: 40px;
}
.viewport {
  position: relative;
  flex: 1;
  min-height: 0;
  background: #4d4d4d;
}
.canvas {
  position: absolute;
  inset: 0;
}
.canvas text {
  fill: #8d8f92;
  font-size: 9px;
}
.ruler {
  fill: #1d2229;
}
.tick {
  stroke: #808386;
}
.corner {
  fill: #85888c;
}
.axis-y {
  stroke: #6f9f6f;
}
.axis-y.up {
  stroke: #72a51f;
}
.axis-x {
  stroke: #a04c8c;
}
.frame {
  position: absolute;
  inset: 0;
  border: 2px solid rgba(90, 151, 207, 0.7);
  pointer-events: none;
}
.zoom {
  position: absolute;
  left: 18px;
  top: 21px;
  display: flex;
  align-items: center;
}
.zoom button {
  width: 32px;
  height: 28px;
}
.zoom .percent {
  width: 52px;
  color: #e8e8e8;
  text-shadow: 0 0 2px #222, 0 0 2px #222;
}
.vbar,
.hbar {
  position: absolute;
  border-radius: 3px;
  background: #565656;
}
.vbar {
  top: 19px;
  right: 4px;
  bottom: 15px;
  width: 4px;
}
.hbar {
  left: 19px;
  right: 16px;
  bottom: 4px;
  height: 4px;
}
.vbar i,
.hbar i {
  position: absolute;
  border-radius: 3px;
  background: #8f8f8f;
}
.vbar i {
  top: 25%;
  left: -1px;
  width: 6px;
  height: 32%;
}
.hbar i {
  left: 24%;
  top: -1px;
  width: 30%;
  height: 6px;
}
.bottom {
  display: flex;
  align-items: center;
  flex: none;
  height: 40px;
  margin-top: 4px;
  padding: 2px 9px 0 2px;
  border-radius: 3px;
  background: #363d4a;
}
.bottom button {
  padding: 0 8px;
}
.version {
  display: flex;
  align-items: center;
  gap: 9px;
  margin-left: auto;
  color: #878b92;
}
.picker {
  display: flex;
  align-items: center;
  flex: 1;
  padding: 0 4px;
  border-radius: 3px;
  background: #252b34;
}
.picker select {
  flex: 1;
  min-width: 0;
  margin-left: 8px;
}
.inspector {
  display: flex;
  flex: 1;
  gap: 3px;
  min-height: 0;
  padding: 4px 7px 0 4px;
  border-radius: 3px;
  background: #21252e;
}
.props {
  display: flex;
  flex-direction: column;
  flex: 1;
  min-width: 0;
  overflow: hidden;
}
.props h2 {
  display: flex;
  align-items: center;
  justify-content: center;
  flex: none;
  gap: 6px;
  height: 24px;
  margin: 0;
  padding: 0 2px 2px 0;
  border-radius: 2px;
  background: #41454d;
  font-size: 14px;
  font-weight: 700;
  line-height: 20px;
}
.section {
  justify-content: flex-start;
  flex: none;
  height: 24px;
  padding-bottom: 2px;
  background: #282c35;
  font-weight: 700;
}
.rest {
  flex: 1;
  background: #282c35;
}
.prop {
  display: grid;
  grid-template-columns: 1fr 1fr;
  flex: none;
}
.prop > label:first-child,
.name {
  padding: 4px 0 0 8px;
  color: #989b9f;
  white-space: nowrap;
}
.prop.spaced > label:first-child,
.name {
  padding-top: 3px;
}
.spaced {
  margin: 4px 0;
}
.vector {
  display: grid;
  gap: 4px;
}
.editor {
  display: flex;
  align-items: center;
  height: 29px;
  border-radius: 3px;
  background: #1d2127;
}
.editor.tall {
  height: 30px;
  padding: 0 2px 0 6px;
}
.editor select {
  flex: 1;
  min-width: 0;
}
.axis {
  width: 20px;
  height: 29px;
  line-height: 26px;
  border-radius: 3px 0 0 3px;
  background: #14171d;
  text-align: center;
}
.axis.x {
  color: #916153;
}
.axis.y {
  color: #5f9c6b;
}
.editor > input[type="text"] {
  flex: 1;
  min-width: 0;
  width: 0;
  padding: 0 0 3px 4px;
}
.check {
  position: relative;
  gap: 9px;
  height: 28px;
  padding-left: 5px;
  color: #70bafa;
}
.check input {
  width: 14px;
  height: 14px;
  border-radius: 2px;
  background: #555a62;
}
.check input:checked {
  background: #70bafa;
}
.check svg {
  position: absolute;
  left: 5px;
  top: 7px;
  fill: none;
  stroke: #fff;
  stroke-width: 2;
  pointer-events: none;
}
.scroll {
  position: relative;
  width: 6px;
  margin: 3px 0 9px;
}
.scroll::before {
  content: "";
  position: absolute;
  inset: 0 1px;
  border-radius: 2px;
  background: #30343d;
}
.scroll i {
  position: absolute;
  inset: 0 0 auto;
  height: 67%;
  border-radius: 3px;
  background: #70737a;
}
.tooltip {
  position: absolute;
  left: 239px;
  top: 237px;
  padding: 5px 6px 4px;
  background: #0e1116;
  color: #dfe0e2;
  line-height: 22px;
  white-space: nowrap;
}
.tooltip p,
.tooltip ul {
  margin: 0;
  padding: 0;
}
.tooltip li {
  position: relative;
  padding-left: 13px;
  list-style: none;
}
.tooltip li::before {
  content: "•";
  position: absolute;
  left: 0;
}
.tooltip li.next {
  padding-left: 15px;
}
.tooltip li.next::before {
  content: none;
}
</style>
